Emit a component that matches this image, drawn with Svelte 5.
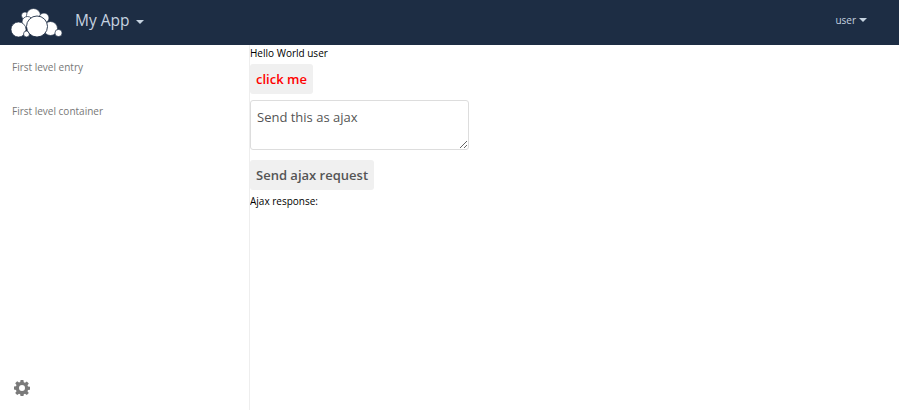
<script>
  const bubbles = [
    [25, 14.5, 3.6], [33.5, 14.5, 7], [44, 17, 5], [27.5, 21, 5.5],
    [18.5, 28.5, 7.5], [50.5, 27.5, 7], [58.5, 32, 3.6], [26.5, 33, 3]
  ];
</script>

<header class="bar">
  <div class="brand">
    <svg class="logo" width="60" height="40" viewBox="0 0 60 40" aria-hidden="true">
      <g transform="translate(-6 -2)">
        {#each bubbles as b}
          <circle cx={b[0]} cy={b[1]} r={b[2]} fill="#fff" stroke="#1d2d44" stroke-width="0.7"/>
        {/each}
        <circle cx="37" cy="25.5" r="10.5" fill="#fff" stroke="#1d2d44" stroke-width="0.9"/>
      </g>
    </svg>
    <span class="app">My App</span><span class="caret big"></span>
  </div>
  <div class="user">user<span class="caret"></span></div>
</header>

<div class="body">
  <nav class="side">
    <ul>
      <li>First level entry</li>
      <li>First level container</li>
    </ul>
    <svg class="gear" width="16" height="16" viewBox="0 0 16 16" aria-hidden="true">
      <path fill="#7a7a7a" fill-rule="evenodd" d="M6.6 0h2.8l.4 2.2 1.2.5 1.8-1.3 2 2-1.3 1.8.5 1.2 2.2.4v2.8l-2.2.4-.5 1.2 1.3 1.8-2 2-1.8-1.3-1.2.5-.4 2.2H6.6l-.4-2.2-1.2-.5-1.8 1.3-2-2 1.3-1.8-.5-1.2L-.2 9.4V6.6L2 6.2l.5-1.2-1.3-1.8 2-2L5 2.5l1.2-.5zM8 5a3 3 0 1 0 0 6 3 3 0 0 0 0-6z"/>
    </svg>
  </nav>
  <main class="content">
    <p class="line">Hello World user</p>
    <button class="btn red">click me</button>
    <textarea class="box">Send this as ajax</textarea>
    <button class="btn">Send ajax request</button>
    <p class="line">Ajax response:</p>
  </main>
</div>

<style>
  :global(body) {
    margin: 0;
    background: #fff;
    font-family: "Open Sans", "Noto Sans", sans-serif;
    overflow: hidden;
  }
  .bar {
    height: 45px;
    background: #1d2d44;
    display: flex;
    align-items: center;
    justify-content: space-between;
    padding: 0 32px 0 6px;
  }
  .brand { display: flex; align-items: center; }
  .logo { display: block; margin-right: 9px; }
  .app {
    color: #c6d3e0;
    font-size: 15.5px;
    position: relative;
    top: -3px;
  }
  .user {
    color: #c6d3e0;
    font-size: 10px;
    display: flex;
    align-items: center;
    position: relative;
    top: -3px;
  }
  .caret {
    display: inline-block;
    margin-left: 3px;
    border-top: 4px solid #c6d3e0;
    border-left: 4px solid transparent;
    border-right: 4px solid transparent;
  }
  .caret.big { margin-left: 6px; position: relative; top: -1px; }
  .body { display: flex; height: 365px; }
  .side {
    width: 249px;
    border-right: 1px solid #eee;
    position: relative;
    flex: none;
  }
  .side ul { list-style: none; margin: 0; padding: 0; }
  .side li {
    height: 44px;
    line-height: 44px;
    padding-left: 12px;
    color: #777;
    font-size: 10px;
  }
  .gear { position: absolute; left: 14px; bottom: 14px; }
  .content {
    display: flex;
    flex-direction: column;
    align-items: flex-start;
  }
  .line {
    margin: 0;
    font-size: 10px;
    line-height: 16px;
    color: #000;
  }
  .btn {
    border: 0;
    border-radius: 3px;
    background: #f0f0f0;
    color: #555;
    font: 600 13px "Open Sans", sans-serif;
    height: 30px;
    padding: 0 6px;
    margin: 3px 0;
  }
  .red { color: #f00; }
  .box {
    width: 219px;
    height: 50px;
    box-sizing: border-box;
    margin: 3px 0 7px 0;
    padding: 7px 6px 6px;
    border: 1px solid #ddd;
    border-radius: 3px;
    color: #555;
    font: 13px "Open Sans", sans-serif;
    background: #fff;
  }
</style>
